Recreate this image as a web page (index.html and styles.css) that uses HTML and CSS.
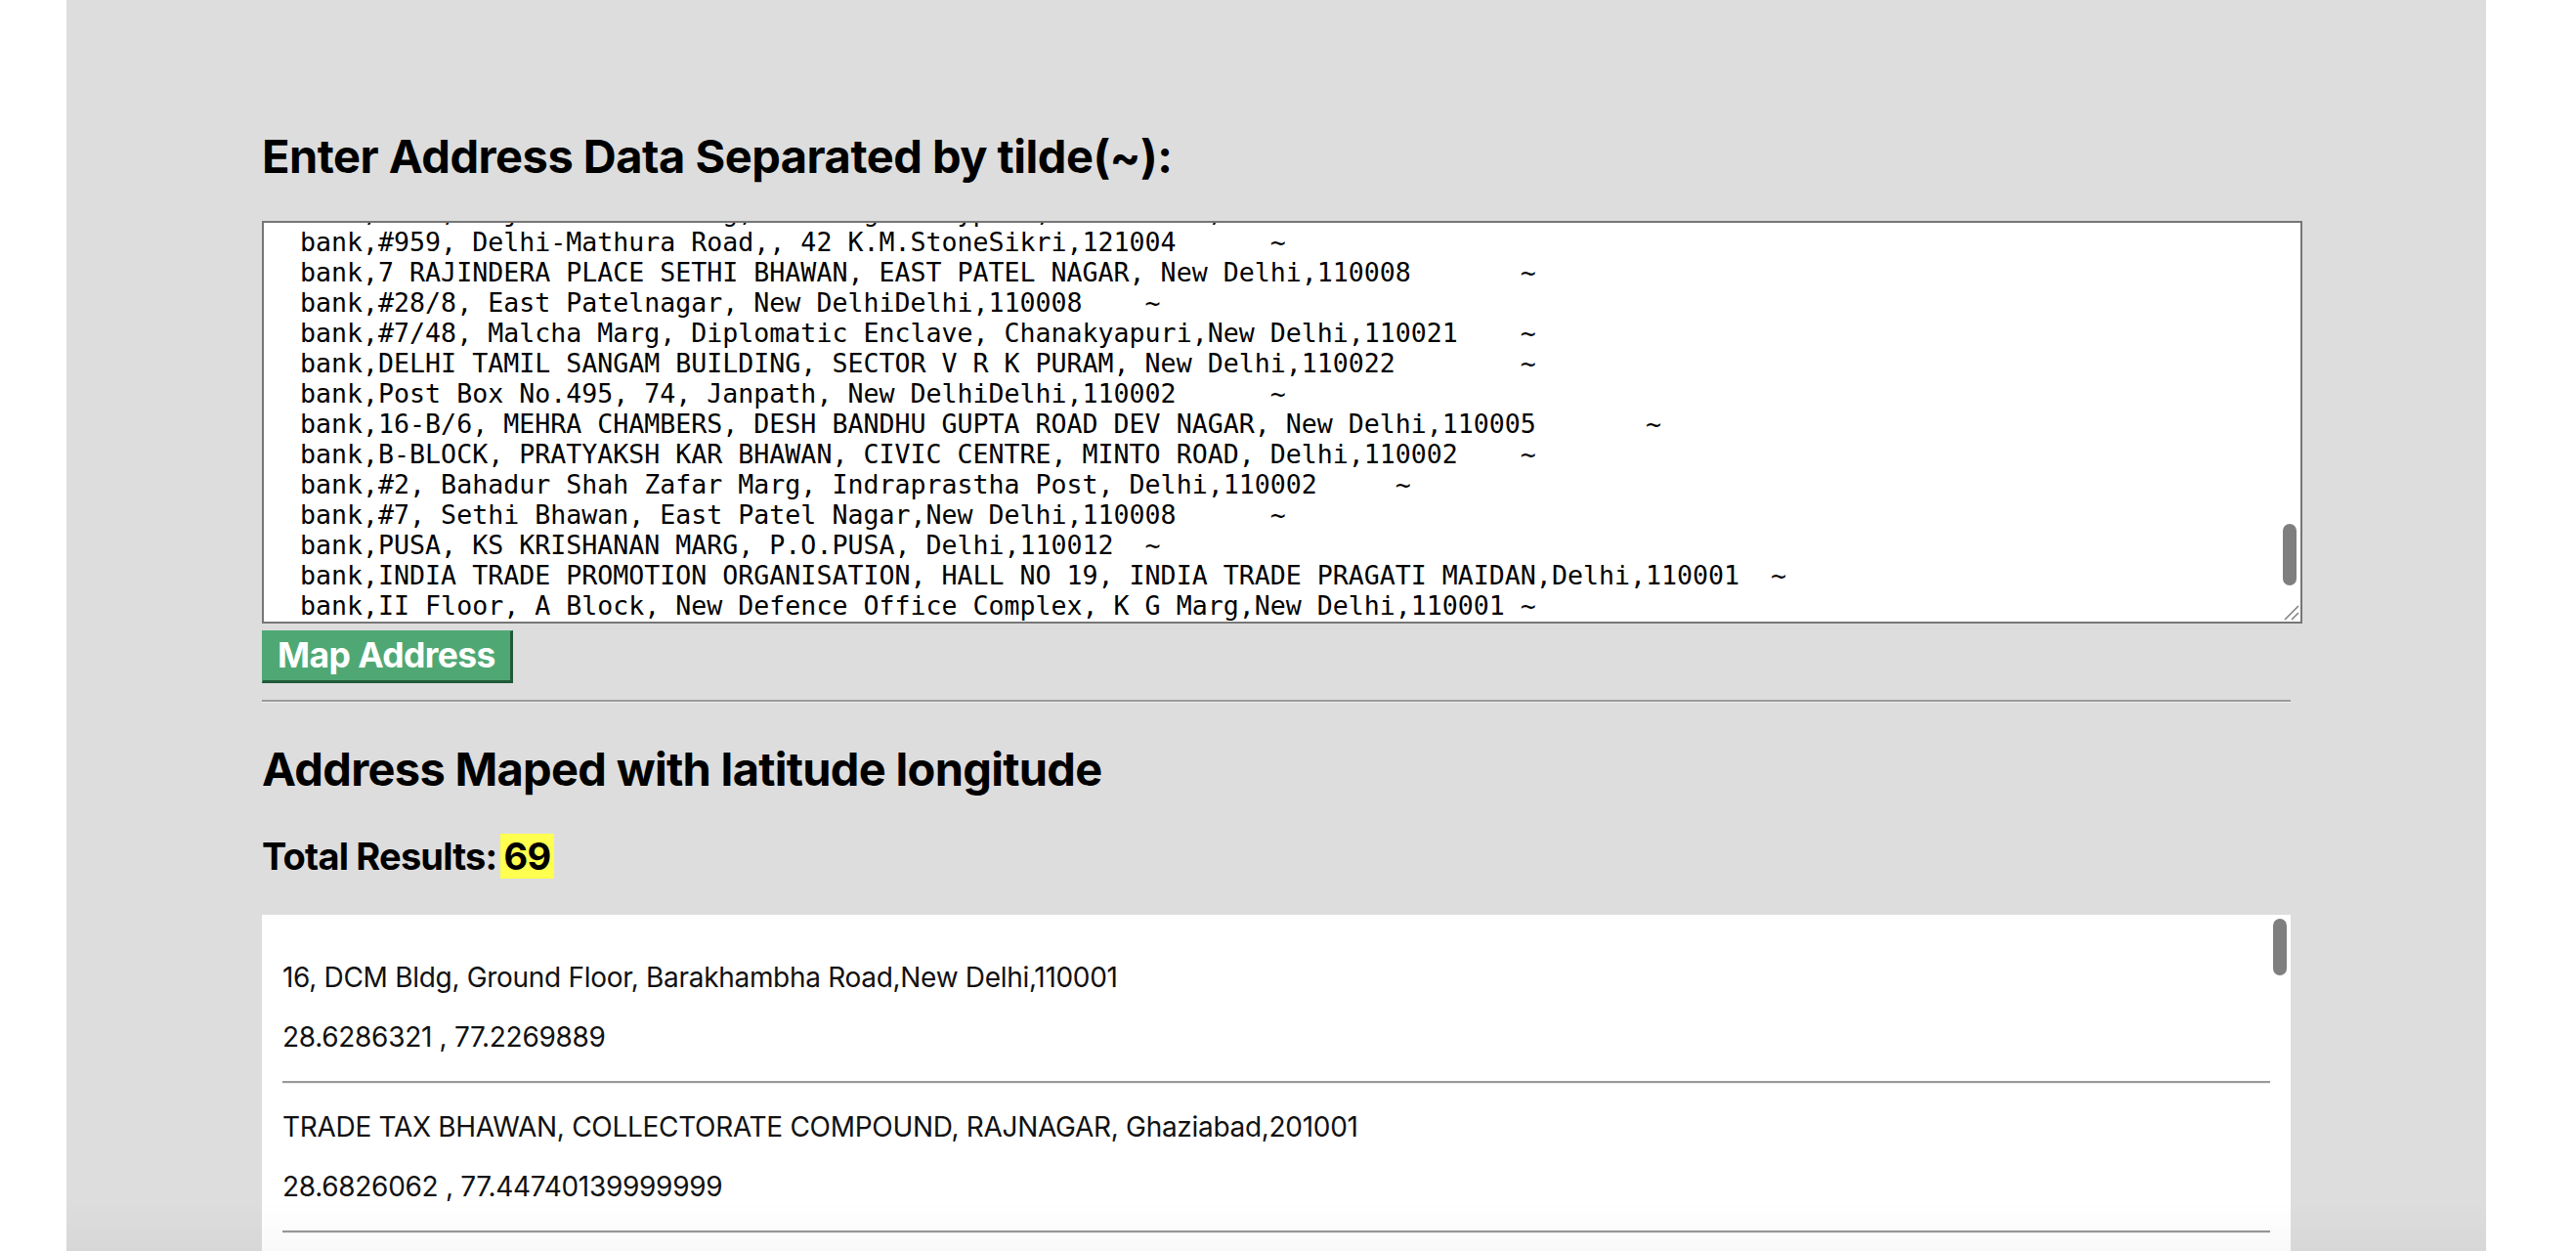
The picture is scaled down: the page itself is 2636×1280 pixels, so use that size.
FILE: index.html
```html
<!DOCTYPE html>
<html lang="en">
<head>
<meta charset="utf-8">
<title>Address Mapper</title>
<link rel="stylesheet" href="styles.css">
</head>
<body>
<main class="page">
  <h2 class="title title-input">Enter Address Data Separated by tilde(~):</h2>
  <div class="input-wrap">
    <div class="textarea">
      <div class="lines">  bank,#3/4, Rajmahal Building, Ballabgarh Bypass, Faridabad,121004   ~
  bank,#959, Delhi-Mathura Road,, 42 K.M.StoneSikri,121004      ~
  bank,7 RAJINDERA PLACE SETHI BHAWAN, EAST PATEL NAGAR, New Delhi,110008       ~
  bank,#28/8, East Patelnagar, New DelhiDelhi,110008    ~
  bank,#7/48, Malcha Marg, Diplomatic Enclave, Chanakyapuri,New Delhi,110021    ~
  bank,DELHI TAMIL SANGAM BUILDING, SECTOR V R K PURAM, New Delhi,110022        ~
  bank,Post Box No.495, 74, Janpath, New DelhiDelhi,110002      ~
  bank,16-B/6, MEHRA CHAMBERS, DESH BANDHU GUPTA ROAD DEV NAGAR, New Delhi,110005       ~
  bank,B-BLOCK, PRATYAKSH KAR BHAWAN, CIVIC CENTRE, MINTO ROAD, Delhi,110002    ~
  bank,#2, Bahadur Shah Zafar Marg, Indraprastha Post, Delhi,110002     ~
  bank,#7, Sethi Bhawan, East Patel Nagar,New Delhi,110008      ~
  bank,PUSA, KS KRISHANAN MARG, P.O.PUSA, Delhi,110012  ~
  bank,INDIA TRADE PROMOTION ORGANISATION, HALL NO 19, INDIA TRADE PRAGATI MAIDAN,Delhi,110001  ~
  bank,II Floor, A Block, New Defence Office Complex, K G Marg,New Delhi,110001 ~</div>
    </div>
    <span class="thumb thumb-input"></span>
    <svg class="grip" width="16" height="16" viewBox="0 0 16 16" aria-hidden="true">
      <line x1="1" y1="15" x2="15" y2="1" stroke="#7a7a7a" stroke-width="1.4"/>
      <line x1="8" y1="15" x2="15" y2="8" stroke="#7a7a7a" stroke-width="1.4"/>
    </svg>
  </div>
  <button class="btn" type="button">Map Address</button>
  <hr class="rule">
  <h2 class="title title-results">Address Maped with latitude longitude</h2>
  <h3 class="total">Total Results:<span class="count">69</span></h3>
  <div class="results-wrap">
    <div class="results">
      <p class="addr">16, DCM Bldg, Ground Floor, Barakhambha Road,New Delhi,110001</p>
      <p class="addr">28.6286321 , 77.2269889</p>
      <hr class="sep">
      <p class="addr">TRADE TAX BHAWAN, COLLECTORATE COMPOUND, RAJNAGAR, Ghaziabad,201001</p>
      <p class="addr">28.6826062 , 77.44740139999999</p>
      <hr class="sep">
      <p class="addr">Sector-16, Faridabad,121002</p>
      <p class="addr">28.4089123 , 77.3177894</p>
      <hr class="sep">
    </div>
    <span class="thumb thumb-results"></span>
  </div>
</main>
<div class="bottom-fade"></div>
</body>
</html>
```
FILE: styles.css
```css
html, body {
  margin: 0;
  padding: 0;
  background: #ffffff;
  overflow: hidden;
}

.page {
  margin-left: 68px;
  width: 2476px;
  min-height: 1400px;
  box-sizing: border-box;
  padding: 132px 200px 0 200px;
  background: #dddddd;
  font-family: "Inter", "Liberation Sans", sans-serif;
  color: #000;
}

.title {
  margin: 0;
  font-family: "Inter", "Liberation Sans", sans-serif;
  font-weight: 700;
  font-size: 47px;
  line-height: 56px;
  letter-spacing: -0.5px;
}

.title-input {
  margin-bottom: 38px;
}

.title-results {
  margin-top: 40px;
  letter-spacing: -0.7px;
}

.input-wrap {
  position: relative;
  width: 2088px;
  height: 412px;
}

.textarea {
  box-sizing: border-box;
  width: 2088px;
  height: 412px;
  border: 2px solid #767676;
  background: #ffffff;
  padding: 0 5px 1px 5px;
  overflow: hidden;
  display: flex;
  flex-direction: column;
  justify-content: flex-end;
}

.lines {
  font-family: "DejaVu Sans Mono", "Liberation Mono", monospace;
  font-size: 26.6px;
  line-height: 31px;
  white-space: pre;
  color: #000;
}

.thumb {
  position: absolute;
  width: 14px;
  border-radius: 7px;
  background: #7f7f7f;
}

.thumb-input {
  left: 2068px;
  top: 310px;
  height: 63px;
}

.grip {
  position: absolute;
  left: 2069px;
  top: 393px;
}

.btn {
  display: block;
  margin: 7px 0 0 0;
  box-sizing: border-box;
  width: 257px;
  height: 54px;
  padding: 0 0 2px 0;
  background: #4fa874;
  color: #ffffff;
  font-family: "Inter", "Liberation Sans", sans-serif;
  font-weight: 700;
  font-size: 35.5px;
  letter-spacing: -0.6px;
  border-style: solid;
  border-width: 1px 3px 3px 1px;
  border-color: #4fa874 #225a39 #225a39 #4fa874;
}

.rule {
  margin: 17px 0 0 0;
  height: 0;
  border: none;
  border-top: 2px solid #9a9a9a;
  border-bottom: 1px solid #ececec;
}

.total {
  margin: 38px 0 0 0;
  font-family: "Inter", "Liberation Sans", sans-serif;
  font-weight: 700;
  font-size: 38px;
  line-height: 46px;
  letter-spacing: -0.8px;
}

.count {
  display: inline-block;
  margin-left: 3px;
  padding: 0 4px;
  background: #ffff4f;
}

.results-wrap {
  position: relative;
  margin-top: 37px;
}

.results {
  box-sizing: border-box;
  width: 2076px;
  height: 700px;
  overflow: hidden;
  background: #ffffff;
  padding: 20px 21px 0 21px;
}

.addr {
  margin: 28px 0;
  font-family: "Inter", "Liberation Sans", sans-serif;
  font-size: 28px;
  line-height: 33px;
  letter-spacing: -0.3px;
  color: #111;
}

.sep {
  margin: 0;
  height: 0;
  border: none;
  border-top: 2px solid #999999;
  border-bottom: 1px solid #eeeeee;
}

.thumb-results {
  left: 2058px;
  top: 4px;
  height: 58px;
}

.bottom-fade {
  position: fixed;
  left: 68px;
  width: 2476px;
  bottom: 0;
  height: 50px;
  background: linear-gradient(to bottom, rgba(0,0,0,0), rgba(0,0,0,0.025));
  pointer-events: none;
}
```
